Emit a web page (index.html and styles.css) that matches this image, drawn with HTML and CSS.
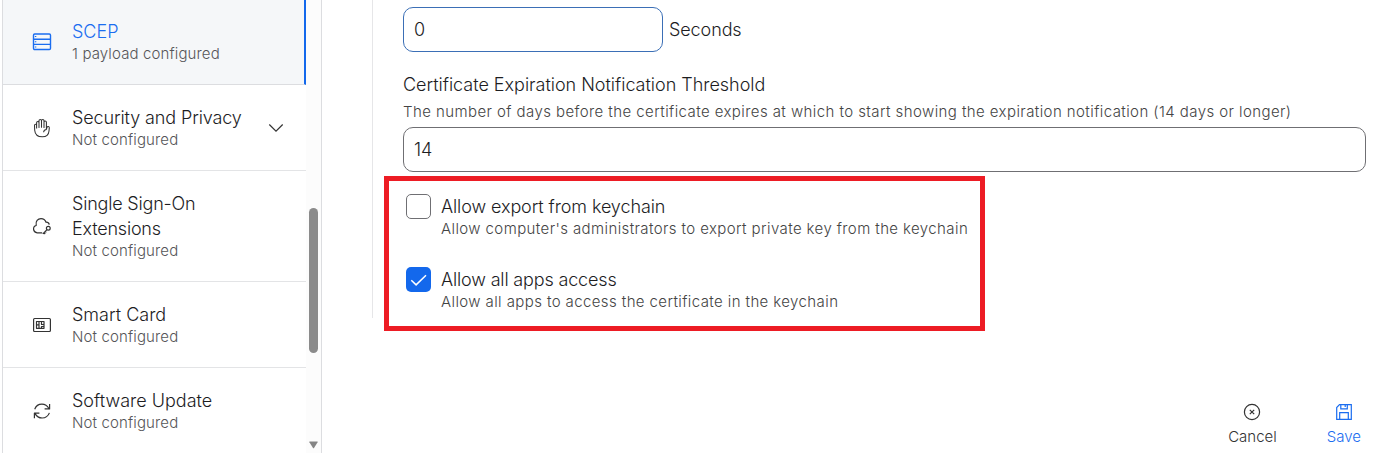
FILE: index.html
```html
<!DOCTYPE html>
<html lang="en">
<head>
<meta charset="utf-8">
<title>SCEP payload</title>
<link rel="stylesheet" href="styles.css">
</head>
<body>
<div class="app">
  <aside class="sidebar">
    <nav class="payloads">
      <div class="item active">
        <svg class="icon" viewBox="0 0 20 20"><rect x="1.5" y="2" width="17" height="15.5" rx="1.2"/><path d="M1.5 7.2h17M1.5 12.4h17M3.6 4.1v1M3.6 9.3v1M3.6 14.5v1"/></svg>
        <div class="label"><div class="name">SCEP</div><div class="status">1 payload configured</div></div>
      </div>
      <div class="item">
        <svg class="icon hand" viewBox="0 0 20 20"><path d="M4.600 10.500V4.700c0-1.700 2.400-1.700 2.400 0V9.500V2.800c0-1.700 2.500-1.700 2.500 0V9.300V2.800c0-1.700 2.500-1.700 2.500 0v6.700V4.300c0-1.700 2.400-1.700 2.400 0v7l.6-1.900c.5-1.500 2.500-1.100 2.300.5l-.3 3.100c-.3 3.300-2.700 5.800-6.600 5.800-4.500 0-7.400-2.700-7.700-6.600l-.2-4.700c0-1.800 2.100-1.800 2.100 0v3M14.400 11.500c-1.500.2-2.700 1.200-2.800 2.700"/></svg>
        <div class="label"><div class="name tight">Security and Privacy</div><div class="status">Not configured</div></div>
        <svg class="chevron" viewBox="0 0 16 10"><path d="M1.300 1.500L8 8.200l6.700-6.700"/></svg>
      </div>
      <div class="item">
        <svg class="icon" viewBox="0 0 20 20"><path d="M10.200 16.800H5.200C.8 16.500.3 10.500 4.200 9.500 3.200 5 6 2.700 9 2.700c2.500 0 4.200 1.300 5 3.500 1.700-.1 2.900.8 3.300 2.400M15 13.600l-4.200 4.200M11.900 16.700l1.300 1.300M13.300 15.300l1 1"/><circle cx="16.300" cy="12.300" r="1.900"/></svg>
        <div class="label"><div class="name tighter">Single Sign-On<br>Extensions</div><div class="status">Not configured</div></div>
      </div>
      <div class="item">
        <svg class="icon" viewBox="0 0 20 20"><rect x="1.600" y="3.500" width="16.800" height="13" rx="1"/><path d="M4.500 6.500h7.500v6.800H4.500zM7 6.500v6.800M9.500 6.500v3h2.500M4.500 9.900H7M9.500 13.300V11.500H12"/></svg>
        <div class="label"><div class="name">Smart Card</div><div class="status">Not configured</div></div>
      </div>
      <div class="item">
        <svg class="icon" viewBox="0 0 20 20"><path d="M2.700 8.200C4 4.700 6.800 3.100 9.900 3.100c3 0 5.500 1.600 7 4.400M17.600 2.900v5h-5M17.400 11.900c-1.300 3.400-4.100 5.100-7.300 5.100-3 0-5.500-1.600-7-4.400M2.400 17.200v-5h5"/></svg>
        <div class="label"><div class="name">Software Update</div><div class="status">Not configured</div></div>
      </div>
    </nav>
    <div class="track">
      <div class="thumb"></div>
      <svg class="arrow" viewBox="0 0 9 8"><path d="M.7.500h7.600q.7 0 .3.700L5 6.900q-.5.700-1 0L.4 1.200Q0 .500.700.500z"/></svg>
    </div>
  </aside>
  <main class="main">
    <section class="form">
      <div class="row"><div class="input short focus">0</div><span class="unit">Seconds</span></div>
      <div class="title">Certificate Expiration Notification Threshold</div>
      <div class="help threshold">The number of days before the certificate expires at which to start showing the expiration notification (14 days or longer)</div>
      <div class="input">14</div>
      <div class="highlight">
        <div class="option">
          <span class="box"></span>
          <div><div class="option-name">Allow export from keychain</div><div class="help">Allow computer's administrators to export private key from the keychain</div></div>
        </div>
        <div class="option">
          <span class="box checked"><svg viewBox="0 0 25 25"><path d="M5.300 13.200l4.800 4.700L20 8.200"/></svg></span>
          <div><div class="option-name apps">Allow all apps access</div><div class="help">Allow all apps to access the certificate in the keychain</div></div>
        </div>
      </div>
    </section>
    <footer class="actions">
      <div class="action"><svg viewBox="0 0 18 18"><circle cx="9" cy="9" r="7.600"/><path class="cross" d="M6.800 6.800l4.400 4.400M11.200 6.800l-4.400 4.400"/></svg><span>Cancel</span></div>
      <div class="action save"><svg viewBox="0 0 18 18"><path d="M4.500 1.700h11.800v14.600H1.700V4.500zM5.800 1.900v3.900h6.500V1.900M10.200 2v2M4.700 16v-6.300h8.600V16"/></svg><span>Save</span></div>
    </footer>
  </main>
</div>
</body>
</html>
```
FILE: styles.css
```css
* { box-sizing: border-box; }
body { margin: 0; background: #fff; color: #1d1d1f; font: 300 18px/25px Inter, sans-serif; overflow: hidden; }
.app { display: flex; height: 453px; overflow: hidden; white-space: nowrap; }
.sidebar { display: flex; width: 320px; margin-left: 2px; border: solid #dcdde0; border-width: 0 1px; flex: none; }
.payloads { width: 303px; }
.item { display: flex; align-items: center; padding: 20px 20px 20px 29px; border-bottom: 1px solid #e3e4e6; }
.item.active { padding-top: 19px; background: #f5f7f9; border-right: 2px solid #1368ec; border-bottom-color: #dcdde0; }
.icon { width: 20px; height: 20px; margin-right: 20px; flex: none; fill: none; stroke: #333; stroke-width: 1.2; stroke-linejoin: round; }
.hand { stroke-width: 1.05; }
.active .icon { stroke: #1a6df0; stroke-width: 1.4; }
.active .name { color: #1a6df0; }
.label { flex: 1; }
.tight { letter-spacing: -.12px; }
.tighter { letter-spacing: -.2px; }
.status { font-size: 15px; line-height: 20px; letter-spacing: .13px; color: #555558; }
.chevron { width: 16px; height: 10px; margin-right: 2px; fill: none; stroke: #333; stroke-width: 1.2; }
.track { flex: 1; background: #fcfcfc; display: flex; flex-direction: column; align-items: center; padding: 208px 0 4px; }
.thumb { width: 9px; height: 145px; border-radius: 5px; background: #8b8b8b; }
.arrow { width: 9px; height: 8px; margin-top: auto; fill: #858585; }
.main { flex: 1; display: flex; flex-direction: column; padding-left: 50px; }
.form { height: 318px; border-left: 1px solid #e6e6e8; padding: 7px 28px 0 30px; flex: none; }
.row { display: flex; align-items: center; gap: 6px; margin-bottom: 20px; }
.unit { letter-spacing: -.1px; }
.title { letter-spacing: -.02px; }
.input { height: 45px; border: 1px solid #6f6f73; border-radius: 10px; padding: 10px 10px; line-height: 24px; }
.short { width: 260px; }
.focus { border-color: #3b6fb6; }
.help { font-size: 15px; line-height: 20px; letter-spacing: .4px; color: #444; }
.threshold { margin: 5px 0; letter-spacing: .42px; }
.highlight { width: 601px; height: 155px; margin: 4px 0 0 -19px; border: 5px solid #ed1c24; padding: 13px 0 0 17px; display: flex; flex-direction: column; gap: 28px; }
.option { display: flex; gap: 10px; }
.option-name { letter-spacing: -.1px; }
.apps { letter-spacing: -.16px; }
.box { width: 25px; height: 25px; border: 1px solid #6f6f73; border-radius: 5px; flex: none; }
.checked { border: 0; background: #1368ec; }
.checked svg { display: block; width: 25px; fill: none; stroke: #fff; stroke-width: 1.5; }
.actions { display: flex; justify-content: flex-end; gap: 50px; padding: 85px 33px 0 0; font-size: 15px; line-height: 20px; color: #333; }
.action { display: flex; flex-direction: column; align-items: center; gap: 6px; }
.action svg { width: 18px; height: 18px; fill: none; stroke: #333; stroke-width: 1.2; }
.save { color: #1a6df0; }
.action.save svg { stroke: #1a6df0; }
```
